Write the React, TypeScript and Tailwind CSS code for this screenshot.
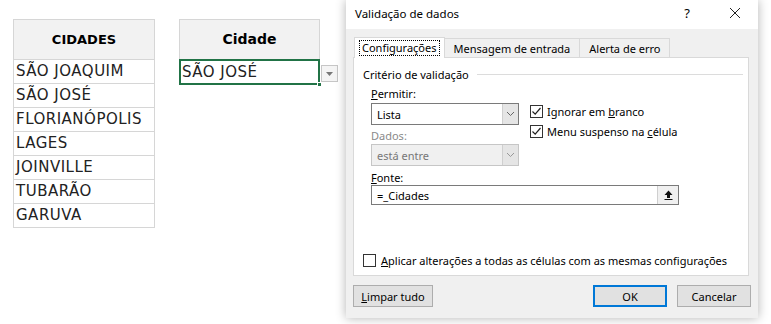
import { ReactNode } from "react";

const cidades = [
  "SÃO JOAQUIM",
  "SÃO JOSÉ",
  "FLORIANÓPOLIS",
  "LAGES",
  "JOINVILLE",
  "TUBARÃO",
  "GARUVA",
];

const sheetFont = { fontFamily: '"DejaVu Sans", sans-serif' };
const uiFont = { fontFamily: '"Noto Sans", sans-serif' };

function Check({ checked }: { checked?: boolean }) {
  return (
    <span className="w-[13px] h-[13px] border border-[#333] bg-white flex items-center justify-center shrink-0">
      {checked && (
        <svg width="11" height="11" viewBox="0 0 11 11">
          <path d="M1.5 5.5 L4.2 8.2 L9.5 2" fill="none" stroke="#222" strokeWidth="1.2" />
        </svg>
      )}
    </span>
  );
}

function Chevron({ color = "#666" }: { color?: string }) {
  return (
    <svg width="9" height="6" viewBox="0 0 9 6">
      <path d="M1 1 L4.5 4.5 L8 1" fill="none" stroke={color} strokeWidth="1" />
    </svg>
  );
}

function Btn({ children, primary, className }: { children: ReactNode; primary?: boolean; className?: string }) {
  return (
    <div
      className={
        "h-[22px] flex items-center justify-center bg-[#e1e1e1] text-black " +
        (primary ? "border-2 border-[#0078d7]" : "border border-[#adadad]") +
        " " +
        (className ?? "")
      }
    >
      {children}
    </div>
  );
}

export default function App() {
  return (
    <div className="w-[771px] h-[324px] bg-white flex overflow-hidden">
      {/* planilha */}
      <div className="w-[346px] shrink-0 flex items-start pt-[19px] pl-[13px] text-[#222]" style={sheetFont}>
        <div className="w-[142px] border-x border-b border-[#d6d6d6]">
          <div className="h-[40px] bg-[#f2f2f2] border-t border-[#d6d6d6] flex items-center justify-center font-bold text-[13px] text-black">
            CIDADES
          </div>
          {cidades.map((c) => (
            <div
              key={c}
              className="h-[24px] border-t border-[#d6d6d6] flex items-center pl-[2px] text-[15px] tracking-[0.5px]"
            >
              {c}
            </div>
          ))}
        </div>
        <div className="ml-[24px] flex flex-col">
          <div className="w-[141px] h-[40px] bg-[#f2f2f2] border-x border-t border-[#d6d6d6] flex items-center justify-center font-bold text-[14px] text-black">
            Cidade
          </div>
          <div className="flex items-start">
            <div className="relative w-[141px] h-[26px] border-2 border-[#217346] flex items-center pl-[1px] text-[15px] tracking-[0.5px]">
              SÃO JOSÉ
              <span className="absolute right-[-4px] bottom-[-4px] w-[5px] h-[5px] bg-[#217346] border border-white" />
            </div>
            <div className="ml-[1px] mt-[6px] w-[17px] h-[17px] border border-[#c6c6c6] bg-[#f4f4f4] flex items-center justify-center">
              <svg width="7" height="4" viewBox="0 0 7 4">
                <path d="M0 0 H7 L3.5 4 Z" fill="#777" />
              </svg>
            </div>
          </div>
        </div>
      </div>

      {/* diálogo */}
      <div
        className="w-[412px] h-[318px] shrink-0 bg-[#f0f0f0] flex flex-col shadow-[0_0_10px_rgba(0,0,0,0.3)] text-[11px] leading-[15px] text-black"
        style={uiFont}
      >
        <div className="h-[29px] bg-white flex items-center pl-[9px] pr-[17px] pb-[3px]">
          <span className="flex-1 text-[11.5px]">Validação de dados</span>
          <span className="text-[13px] mr-[39px]">?</span>
          <svg width="12" height="12" viewBox="0 0 12 12">
            <path d="M1 1 L11 11 M11 1 L1 11" stroke="#222" strokeWidth="1" />
          </svg>
        </div>

        <div className="flex items-end pl-[8px] mt-[7px] h-[21px]">
          <div className="h-[21px] px-[4px] bg-white border border-b-0 border-[#d9d9d9] flex items-center relative z-10 -mb-px">
            <span className="px-[2px] border border-dotted border-black leading-[14px]">Configurações</span>
          </div>
          <div className="h-[19px] px-[9px] border border-b-0 border-l-0 border-[#d9d9d9] bg-[#f0f0f0] flex items-center">
            Mensagem de entrada
          </div>
          <div className="h-[19px] px-[9px] border border-b-0 border-l-0 border-[#d9d9d9] bg-[#f0f0f0] flex items-center">
            Alerta de erro
          </div>
        </div>

        <div className="ml-[7px] w-[396px] h-[219px] bg-white border border-[#d9d9d9] flex flex-col">
          <div className="flex items-center mt-[9px] pl-[9px] pr-[5px]">
            <span>Critério de validação</span>
            <div className="flex-1 h-px bg-[#dcdcdc] ml-[8px]" />
          </div>

          <div className="flex pl-[17px] mt-[4px]">
            <div className="flex flex-col w-[148px]">
              <span>
                <u>P</u>ermitir:
              </span>
              <div className="mt-[2px] h-[22px] border border-[#7a7a7a] flex bg-white">
                <span className="flex-1 pl-[5px] flex items-center">Lista</span>
                <span className="w-[16px] bg-[#e5e5e5] border-l border-[#cfcfcf] flex items-center justify-center">
                  <Chevron />
                </span>
              </div>
              <span className="mt-[3px] text-[#8a8a8a]">Dados:</span>
              <div className="mt-[1px] h-[22px] border border-[#c6c6c6] flex bg-[#f0f0f0]">
                <span className="flex-1 pl-[5px] flex items-center text-[#777]">está entre</span>
                <span className="w-[16px] bg-[#e5e5e5] border-l border-[#cfcfcf] flex items-center justify-center">
                  <Chevron color="#999" />
                </span>
              </div>
            </div>
            <div className="flex flex-col ml-[11px] mt-[18px] gap-[5px]">
              <div className="flex items-center gap-[4px]">
                <Check checked />
                <span>
                  Ignorar em <u>b</u>ranco
                </span>
              </div>
              <div className="flex items-center gap-[4px]">
                <Check checked />
                <span>
                  Menu suspenso na <u>c</u>élula
                </span>
              </div>
            </div>
          </div>

          <div className="flex flex-col pl-[17px] mt-[4px]">
            <span>
              <u>F</u>onte:
            </span>
            <div className="w-[308px] h-[20px] border border-[#7a7a7a] flex bg-white">
              <span className="flex-1 pl-[5px] flex items-center">=_Cidades</span>
              <span className="w-[21px] border-l border-[#cfcfcf] bg-[#f0f0f0] flex items-center justify-center">
                <svg width="9" height="10" viewBox="0 0 9 10">
                  <path d="M4.5 0.5 L8.5 5 H6 V8 H3 V5 H0.5 Z" fill="#111" />
                  <rect x="0.5" y="9" width="8" height="1" fill="#111" />
                </svg>
              </span>
            </div>
          </div>

          <div className="mt-auto mb-[7px] flex items-center pl-[9px] gap-[5px]">
            <Check />
            <span className="whitespace-nowrap">
              <u>A</u>plicar alterações a todas as células com as mesmas configurações
            </span>
          </div>
        </div>

        <div className="flex items-center pl-[7px] mt-[9px]">
          <Btn className="w-[80px]">
            <span>
              <u>L</u>impar tudo
            </span>
          </Btn>
          <Btn primary className="w-[74px] ml-[160px]">OK</Btn>
          <Btn className="w-[74px] ml-[10px]">Cancelar</Btn>
        </div>
      </div>
    </div>
  );
}
